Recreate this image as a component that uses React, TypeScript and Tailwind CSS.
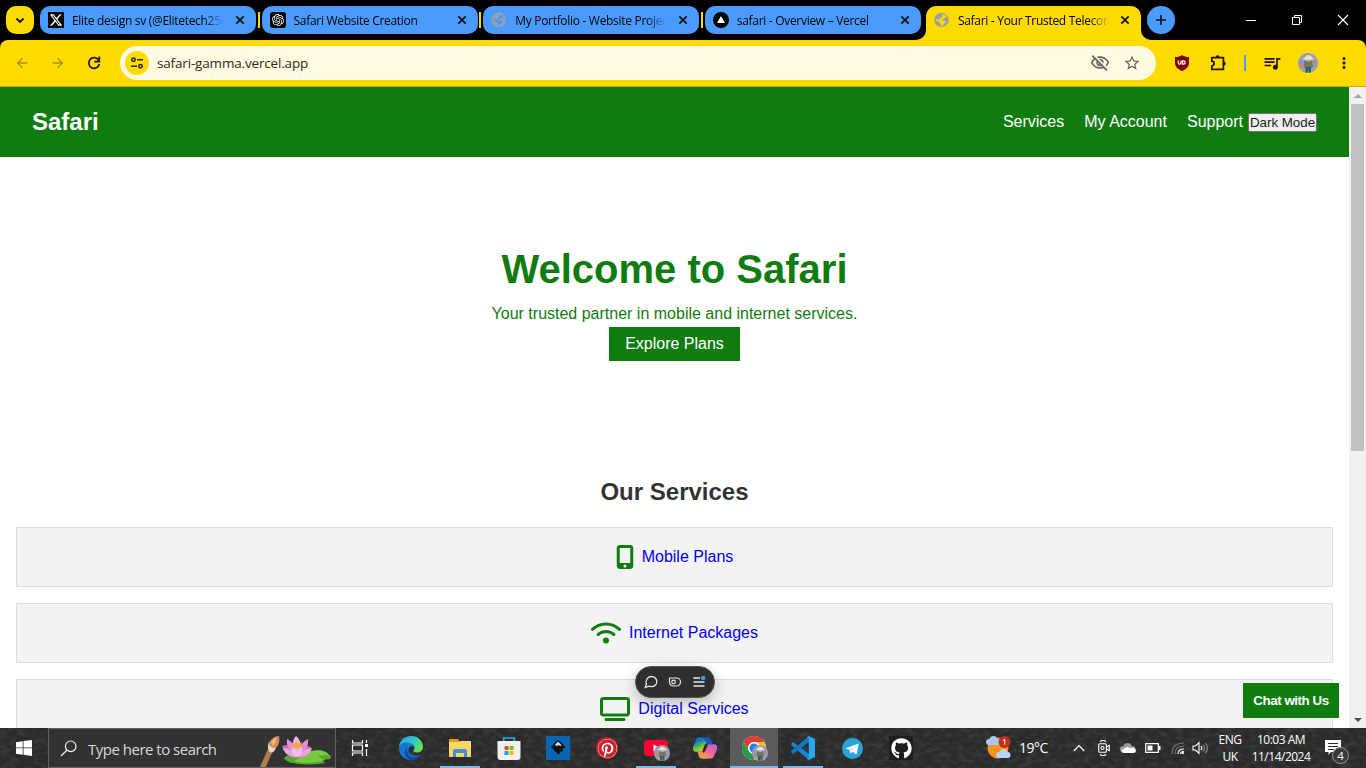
import React from 'react';
import { FaXTwitter, FaMobileScreenButton, FaWifi, FaTv, FaPinterest, FaGithub } from 'react-icons/fa6';
import { SiOpenai } from 'react-icons/si';
import {
  MdArrowBack,
  MdArrowForward,
  MdOutlineVisibilityOff,
  MdStarBorder,
  MdQueueMusic,
  MdMoreVert,
} from 'react-icons/md';

function Globe({ land }: { land: string }) {
  return (
    <svg viewBox="0 0 16 16" className="h-4 w-4">
      <circle cx="7.500" cy="8" r="7.200" fill="#9aa0a6" />
      <path
        d="M8.500 2.300c2 .2 3.500 1.400 4.300 3-.9.200-1.500.9-2.600.8-.3 1.200-1.900.8-2.300 1.600-.3.700.6.8 1.500.9 1.400.1 2.300.5 2.100 1.500-.2 1.200-1.700 1.300-2 2.300-.3 1-1.300 1.600-2.600 1.300.2-1-.1-1.700-.8-2.100-.8-.4-.3-1.400-1-1.900-.8-.6-2.200-.5-3-1.300-.2-.3-.2-.8 0-1.200 1.200-.1 2.400.6 3.400.5.9-.1.400-1.200 1.100-1.800.7-.5 1.900-.4 1.700-1.500-.1-.7-.3-1.300.2-2.100z"
        fill={land}
      />
    </svg>
  );
}

function CloseX() {
  return (
    <svg viewBox="0 0 10 10" className="h-2.5 w-2.5 shrink-0">
      <path d="M1.300 1.300l7.400 7.400M8.700 1.300L1.300 8.700" stroke="#111" strokeWidth="1.700" fill="none" />
    </svg>
  );
}

function Tab({ icon, title, active = false }: { icon: React.ReactNode; title: string; active?: boolean }) {
  return (
    <div
      className={
        active
          ? 'relative flex h-[34px] w-[215px] shrink-0 items-start rounded-t-[10px] bg-[#ffdb00] pl-2 pt-1.5'
          : 'flex h-7 w-[216px] shrink-0 items-start rounded-[10px] bg-[#4b9bff] pl-2 pt-1.5'
      }
    >
      {active && (
        <>
          <svg viewBox="0 0 10 10" className="absolute -left-2.5 bottom-0 h-2.5 w-2.5">
            <path d="M10 0v10H0A10 10 0 0 0 10 0z" fill="#ffdb00" />
          </svg>
          <svg viewBox="0 0 10 10" className="absolute -right-2.5 bottom-0 h-2.5 w-2.5">
            <path d="M0 0v10h10A10 10 0 0 1 0 0z" fill="#ffdb00" />
          </svg>
        </>
      )}
      <div className="flex h-4 w-4 shrink-0 items-center justify-center">{icon}</div>
      <div className="ml-2 mt-px h-4 w-[151px] overflow-hidden whitespace-nowrap text-[12px] leading-4 tracking-[-0.3px] text-black [mask-image:linear-gradient(to_right,#000_132px,transparent_151px)]">
        {title}
      </div>
      <div className={active ? 'ml-[11px] pt-[3px]' : 'ml-3 pt-[3px]'}>
        <CloseX />
      </div>
    </div>
  );
}

function Separator() {
  return (
    <div className="flex w-[5.600px] shrink-0 justify-center">
      <div className="mt-1.5 h-4 w-0.5 shrink-0 bg-[#ffdb00]" />
    </div>
  );
}

function Avatar({ className }: { className: string }) {
  return (
    <svg viewBox="0 0 20 20" className={className}>
      <clipPath id="face">
        <circle cx="10" cy="10" r="10" />
      </clipPath>
      <g clipPath="url(#face)">
        <rect width="20" height="20" fill="#8e9bc6" />
        <rect y="14" width="20" height="6" fill="#98a4ac" />
        <path d="M1 12l4-1 1 3-4 1zM14 8.500l4-1v2l-4 1z" fill="#e77b5b" />
        <path d="M6 8l8 0 1 6-2 1H7l-1-1z" fill="#727963" />
        <path d="M7.500 14h5.500v6H11l-.7-4-.8 4h-2z" fill="#345d60" />
        <circle cx="10.300" cy="6.500" r="2.400" fill="#c8a184" />
        <path d="M4 6c1-1 3-1 3.500-2.500 1-1.800 5-1.800 6 0C14 5 15 5 16.500 6c-3 1-9.500 1-12.500 0z" fill="#f0e4c8" />
      </g>
    </svg>
  );
}

function BrowserChrome() {
  return (
    <>
      <div className="flex h-10 items-start bg-black pl-1.5 pt-1.5">
        <div className="flex h-7 w-7 shrink-0 items-center justify-center rounded-[10px] bg-[#ffdb00]">
          <svg viewBox="0 0 10 10" className="h-2.5 w-2.5">
            <path d="M1.500 3.500L5 7l3.500-3.500" fill="none" stroke="#111" strokeWidth="1.800" />
          </svg>
        </div>
        <div className="ml-1.5 flex w-[1101px] shrink-0 items-start">
          <Tab
            title="Elite design sv (@Elitetech254)"
            icon={
              <span className="flex h-4 w-4 items-center justify-center bg-black">
                <FaXTwitter className="h-3.5 w-3.5 text-white" />
              </span>
            }
          />
          <Separator />
          <Tab
            title="Safari Website Creation"
            icon={
              <span className="flex h-4 w-4 items-center justify-center rounded-[3px] bg-black">
                <SiOpenai className="h-3 w-3 text-white" />
              </span>
            }
          />
          <Separator />
          <Tab title="My Portfolio - Website Project" icon={<Globe land="#4b9bff" />} />
          <Separator />
          <Tab
            title="safari - Overview – Vercel"
            icon={
              <svg viewBox="0 0 16 16" className="h-4 w-4">
                <circle cx="8" cy="8" r="8" />
                <path d="M8 4l4 7H4z" fill="#fff" />
              </svg>
            }
          />
          <div className="w-[5.200px] shrink-0" />
          <Tab active title="Safari - Your Trusted Telecom Partner" icon={<Globe land="#ffdb00" />} />
        </div>
        <div className="ml-1.5 flex h-7 w-7 shrink-0 items-center justify-center rounded-full bg-[#4b9bff]">
          <svg viewBox="0 0 10 10" className="h-2.5 w-2.5">
            <path d="M5 0v10M0 5h10" stroke="#111" strokeWidth="1.600" />
          </svg>
        </div>
        <div className="ml-[53px] mt-[-6px] flex h-10">
          <svg viewBox="0 0 46 40" className="h-10 w-[46px]">
            <path d="M18 20.500h10" stroke="#fff" />
          </svg>
          <svg viewBox="0 0 46 40" className="h-10 w-[46px]">
            <path d="M18.500 17.500h7v7h-7zM20.500 17.500v-2h7v7h-2" fill="none" stroke="#fff" />
          </svg>
          <svg viewBox="0 0 46 40" className="h-10 w-[46px]">
            <path d="M18 15l10 10M28 15L18 25" stroke="#fff" strokeWidth="1.200" />
          </svg>
        </div>
      </div>
      <div className="bg-black">
        <div className="flex h-[47px] items-start rounded-t-lg border-b border-[#c9aa13] bg-[#ffdb00] pt-1.5">
          <div className="ml-[14px] flex h-[34px] items-center">
            <MdArrowBack className="h-4 w-4 text-[#a98f10]" />
            <MdArrowForward className="ml-5 h-4 w-4 text-[#a98f10]" />
            <svg viewBox="0 0 16 16" className="ml-5 h-4 w-4">
              <path d="M12.600 5.200A5.300 5.300 0 1 0 13.300 9" fill="none" stroke="#21120a" strokeWidth="1.700" />
              <path d="M13.300 1.600v5H8.300" fill="none" stroke="#21120a" strokeWidth="1.700" />
            </svg>
          </div>
          <div className="ml-[18px] flex h-[34px] w-[1036px] shrink-0 items-center rounded-full bg-[#fffae0] pl-[5px]">
            <div className="flex h-6 w-6 shrink-0 items-center justify-center rounded-full bg-[#ffdb00]">
              <svg viewBox="0 0 14 14" className="h-3.5 w-3.5" fill="none" stroke="#30230c" strokeWidth="1.500">
                <circle cx="3.500" cy="3.800" r="1.700" />
                <path d="M7 3.800h6M1 10.200h6" />
                <circle cx="10.500" cy="10.200" r="1.700" />
              </svg>
            </div>
            <span className="ml-2 text-[13.500px] leading-5 tracking-[-0.170px] text-[#2d2a1c]">safari-gamma.vercel.app</span>
            <MdOutlineVisibilityOff className="ml-auto h-5 w-5 text-[#66655d]" />
            <MdStarBorder className="ml-[13px] mr-[15px] h-[18px] w-[18px] text-[#66655d]" />
          </div>
          <div className="flex h-[34px] items-center">
            <svg viewBox="0 0 16 16" className="ml-[18px] h-4 w-4">
              <path d="M8 0c2 1.500 4 2 7 2v6c0 4-3.500 6.500-7 8-3.500-1.500-7-4-7-8V2c3 0 5-.5 7-2z" fill="#800000" />
              <path d="M4.200 5.500v2.300a1.400 1.400 0 0 0 2.800 0V5.500M8.500 5.900v3.200h1a1.600 1.600 0 0 0 0-3.200z" fill="none" stroke="#fff" strokeWidth="1.200" />
            </svg>
            <svg viewBox="0 0 20 20" className="ml-[18px] h-5 w-5">
              <path
                d="M3.800 4.600h11.600v11.800H3.800v-3.600q2.400-.4 2.400-2.300T3.800 8.200z"
                fill="none"
                stroke="#21120a"
                strokeWidth="1.700"
                strokeLinejoin="round"
              />
              <path d="M7.600 4.200a2 2 0 0 1 4 0zM15.800 8.500a2 2 0 0 1 0 4z" fill="#21120a" />
            </svg>
            <div className="ml-4 h-4 w-0.5 bg-[#4b9bff]" />
            <MdQueueMusic className="ml-4 h-5 w-5 text-[#21120a]" />
            <Avatar className="ml-4 h-5 w-5" />
            <MdMoreVert className="ml-[17px] h-[18px] w-[18px] text-[#21120a]" />
          </div>
        </div>
      </div>
    </>
  );
}

function ServiceCard({ icon, label }: { icon: React.ReactNode; label: string }) {
  return (
    <div className="mb-4 flex h-[60px] shrink-0 items-center justify-center border border-[#ddd] bg-[#f3f3f3]">
      {icon}
      <span className="ml-2 text-base leading-6 text-[#0000ee]">{label}</span>
    </div>
  );
}

function Site() {
  return (
    <div className="relative flex h-[641px] overflow-hidden bg-white font-['Liberation_Sans',Arial,sans-serif]">
      <div className="w-[1349px] shrink-0">
        <header className="flex h-[70px] items-center justify-between bg-[#107c10] px-8 text-white">
          <div className="text-2xl font-bold">Safari</div>
          <nav className="flex items-center text-base">
            <span>Services</span>
            <span className="ml-5">My Account</span>
            <span className="ml-5">Support</span>
            <span className="ml-[5px] mt-px flex h-[19px] w-[69px] items-center justify-center whitespace-nowrap rounded-[2px] border border-[#767676] bg-[#efefef] text-[13.333px] leading-4 text-[#222]">
              Dark Mode
            </span>
          </nav>
        </header>
        <section className="flex h-[284px] flex-col items-center pt-[89px] text-[#107c10]">
          <h1 className="text-[40px] font-bold leading-[46px]">Welcome to Safari</h1>
          <p className="mt-3 text-base leading-[20px]">Your trusted partner in mobile and internet services.</p>
          <div className="mt-[3px] flex h-[34px] w-[131px] items-center justify-center bg-[#107c10] text-base text-white">
            Explore Plans
          </div>
        </section>
        <section className="px-4 pt-[37px]">
          <h2 className="mb-[21px] text-center text-2xl font-bold leading-7 text-[#333]">Our Services</h2>
          <ServiceCard icon={<FaMobileScreenButton className="h-6 w-[18px] text-[#107c10]" />} label="Mobile Plans" />
          <ServiceCard icon={<FaWifi className="h-6 w-[30px] text-[#107c10]" />} label="Internet Packages" />
          <ServiceCard icon={<FaTv className="h-6 w-[30px] text-[#107c10]" />} label="Digital Services" />
        </section>
      </div>
      <div className="flex w-[17px] shrink-0 flex-col items-center bg-[#f1f1f1]">
        <div className="flex h-[17px] items-center">
          <svg viewBox="0 0 8 4" className="h-1 w-2"><path d="M0 4l4-4 4 4z" fill="#a3a3a3" /></svg>
        </div>
        <div className="h-[347px] w-[13px] bg-[#c1c1c1]" />
        <div className="mt-auto flex h-[17px] items-center">
          <svg viewBox="0 0 8 4" className="h-1 w-2"><path d="M0 0l4 4 4-4z" fill="#505050" /></svg>
        </div>
      </div>
      <div className="absolute left-[1243px] top-[596px] flex h-[35px] w-24 items-center justify-center whitespace-nowrap bg-[#107c10] text-[13.333px] font-bold tracking-[-0.450px] text-white">
        Chat with Us
      </div>
      <div className="absolute left-[635px] top-[579px] flex h-8 w-20 items-center justify-center gap-2.5 rounded-full border border-[#555] bg-[#2e2e2e] shadow-[0_4px_14px_rgba(0,0,0,0.25)]">
        <svg viewBox="0 0 14 14" className="h-3.5 w-3.5" fill="none" stroke="#e8e8e8" strokeWidth="1.300">
          <path d="M7.300 1.500C10.500 1.500 12.800 3.700 12.800 6.600s-2.300 5-5.500 5c-.8 0-1.500-.1-2.100-.4L1.200 12.500l1.300-3.200C1.100 5.500 3.500 1.500 7.300 1.500z" />
        </svg>
        <svg viewBox="0 0 14 14" className="h-3.5 w-3.5" fill="none" stroke="#e8e8e8" strokeWidth="1.200">
          <path d="M1.500 3h7a4 4 0 0 1 0 8h-3a4 4 0 0 1-4-4z" />
          <circle cx="5.600" cy="7" r="1.800" />
        </svg>
        <svg viewBox="0 0 14 14" className="h-3.5 w-3.5">
          <path d="M1.500 3h6.500M1.500 7h11M1.500 11h11" stroke="#e8e8e8" strokeWidth="1.400" />
          <circle cx="11.200" cy="2.900" r="2.200" fill="#3b9cff" />
        </svg>
      </div>
    </div>
  );
}

function Lotus() {
  return (
    <svg viewBox="0 0 80 38" className="h-[38px] w-20">
      <path d="M5 38C8 31 11 24 14 18l5 2c-3 6-6 12-8 18z" fill="#a97c50" />
      <path d="M14 13c-2 4-1 8 1 10 2 1 4 0 5-2l2-5z" fill="#e8d3cc" />
      <path d="M14 15c1-5 6-8 10-8 1 4 0 9-3 12-3 0-6-1-7-4z" fill="#d28a55" />
      <path d="M16 14c1-3 3-5 6-6-1 4-2 7-4 9z" fill="#f0b47e" />
      <path d="M29 29c6-7 30-9 42-5l5 3-1 3-8 1 3 3c-9 2-38 3-41-5z" fill="#54ab2f" />
      <path d="M54 23c8-3 17-2 20 3l-12 1 8 4c-8 3-22 4-31 1z" fill="#79cb3e" />
      <g transform="translate(-1 0)">
        <path d="M28 17c4-2 10-1 14 1 5-2 10-2 15 0-1 6-6 11-13 11-8 0-14-5-16-12z" fill="#c968bd" />
        <path d="M43 28c-7-4-11-11-10-18 6 3 10 9 10 18zM44 28c7-4 11-11 10-18-6 3-10 9-10 18z" fill="#e18fd5" />
        <path d="M43 28c-5-7-6-16-1-21 6 5 7 14 1 21z" fill="#f2b3e7" />
        <path d="M43 28c-4-6-9-9-14-9 1 5 7 10 14 9zM44 28c4-6 9-9 14-9-1 5-7 10-14 9z" fill="#eaa5df" />
        <path d="M38 14l3 1 1-3 3 3 3-2-1 5-4 2-4-2z" fill="#f8a83b" />
        <path d="M43 28c-4-2-6-6-5-9 3 1 5 4 5 9zM43 28c4-2 6-6 5-9-3 1-5 4-5 9z" fill="#f5c3ed" />
      </g>
    </svg>
  );
}

function AppSlot({ children, running = false, focused = false }: { children: React.ReactNode; running?: boolean; focused?: boolean }) {
  return (
    <div className={focused ? 'relative mr-px flex h-10 w-12 items-center justify-center bg-[#5b5b5b]' : 'relative mr-px flex h-10 w-12 items-center justify-center'}>
      {children}
      {running && (
        <div className={focused ? 'absolute bottom-0 left-0 h-0.5 w-12 bg-[#76b9ed]' : 'absolute bottom-0 left-1 h-0.5 w-10 bg-[#76b9ed]'} />
      )}
    </div>
  );
}

function EdgeIcon() {
  return (
    <svg viewBox="0 0 24 24" className="h-6 w-6">
      <defs>
        <linearGradient id="edgeTop" x1="0" y1="0" x2="1" y2=".4">
          <stop offset="0" stopColor="#249fdf" />
          <stop offset=".6" stopColor="#31c5ce" />
          <stop offset="1" stopColor="#64dc61" />
        </linearGradient>
      </defs>
      <path d="M0 12C0 5 5 0 12 0s12 5 12 10.500c0 4-3 6-6 6-2 0-4.200-.7-3.400-2.200.7-1 1.200-2 .7-3.500C14 7 4 6 0 12z" fill="url(#edgeTop)" />
      <path d="M0 12C.5 8 4 6.500 7.500 6.500c4 0 7.300 2 7.800 4.500-1.300-1.200-4.300-1-5.500 1.500-2 5 4 9.300 12.400 6C20 22 16 24 12 24 5 24 0 18.500 0 12z" fill="#1375cf" />
      <path d="M9 11c-3 4 0 9.500 5 10 3 .3 6-.8 8.200-2.500C20 22 16 24 12 24c-4-1-6-4.500-6-7.500 0-2.300 1-4.300 3-5.500z" fill="#0b4b9b" />
    </svg>
  );
}

function Taskbar() {
  return (
    <footer className="relative flex h-10 items-center overflow-hidden bg-[#292a29] text-white">
      <svg className="absolute inset-0 h-10 w-full opacity-10">
        <filter id="grain">
          <feTurbulence type="fractalNoise" baseFrequency=".12 .2" numOctaves="5" seed="8" />
          <feColorMatrix values="0 0 0 0 .65 0 0 0 0 .7 0 0 0 0 .68 0 2.500 0 0 -1" />
        </filter>
        <rect width="1366" height="40" filter="url(#grain)" />
      </svg>
      <div className="relative flex h-10 w-12 items-center justify-center">
        <svg viewBox="0 0 16 16" className="h-4 w-4">
          <path d="M0 2.200l6.700-1v6.300H0zM7.500 1.100L16 0v7.500H7.500zM0 8.300h6.700v6.400L0 13.800zM7.500 8.300H16V16l-8.500-1.200z" fill="#fff" />
        </svg>
      </div>
      <div className="relative flex h-10 w-72 items-center border border-[#616161] bg-[#323232] pl-[11px]">
        <svg viewBox="0 0 17 17" className="h-[17px] w-[17px]">
          <circle cx="10.700" cy="6.300" r="5.300" fill="none" stroke="#eee" strokeWidth="1.200" />
          <path d="M7 10L1 16" stroke="#eee" strokeWidth="1.300" />
        </svg>
        <span className="ml-[11px] whitespace-nowrap pt-px text-[15px] leading-5 tracking-[-0.500px] text-[#d8d8d8]">Type here to search</span>
        <div className="absolute bottom-0 right-0"><Lotus /></div>
      </div>
      <div className="relative flex h-10 w-12 items-center justify-center">
        <svg viewBox="0 0 18 18" className="h-[18px] w-[18px]" fill="none" stroke="#fff" strokeWidth="1.200">
          <path d="M1.500 1v3h10V1M1.500 17v-3h10v3M1.500 6h10v6h-10zM15.500 1v3M15.500 10v7" />
          <path d="M14 5h3v3h-3z" fill="#fff" stroke="none" />
        </svg>
      </div>
      <div className="relative ml-[3px] flex">
        <AppSlot><EdgeIcon /></AppSlot>
        <AppSlot running>
          <svg viewBox="0 0 24 24" className="h-6 w-6">
            <path d="M1 3h9l2 3H1z" fill="#e19c12" />
            <path d="M1 6h10l2-1h10v16H1z" fill="#fbd568" />
            <path d="M5 21v-6q0-2 2-2h10q2 0 2 2v6h-3v-4H8v4z" fill="#3e8fd3" />
          </svg>
        </AppSlot>
        <AppSlot>
          <svg viewBox="0 0 24 24" className="h-6 w-6">
            <path d="M6.700 6V2h10.600v4" fill="none" stroke="#24afe7" strokeWidth="1.700" />
            <path d="M.5 5h23v16q0 3-3 3h-17q-3 0-3-3z" fill="#f1f1f1" />
            <path d="M7.500 10h4v4h-4z" fill="#f25022" />
            <path d="M12.500 10h4v4h-4z" fill="#7fba00" />
            <path d="M7.500 15h4v4h-4z" fill="#00a4ef" />
            <path d="M12.500 15h4v4h-4z" fill="#ffb900" />
          </svg>
        </AppSlot>
        <AppSlot>
          <svg viewBox="0 0 24 24" className="h-6 w-6">
            <path d="M0 0h24v24H0z" fill="#0864b5" />
            <path d="M12 4.500q1 0 2 1l5 5c1 1.500-1.500 2-3 2.500 1 1 2 1.500.5 2.200-2 .7-2.500 0-2.500 1.800 0 1-3.500 1.500-3.500.3 0-1 .5-1.500-1.500-2-2-.6-.5-1.300-1-2-1-1-3.500-1-2.500-2.800l4.500-5q1-1 2-1z" fill="#111" />
            <path d="M12 5.500l3.800 4-1.800.5-1.500-1-1.500 1.300L9.500 9l-1.300.7z" fill="#d8d8d8" />
          </svg>
        </AppSlot>
        <AppSlot>
          <span className="flex h-[22px] w-[22px] items-center justify-center rounded-full bg-[#c8232c]">
            <FaPinterest className="h-[19px] w-[19px] rounded-full bg-white text-[#c8232c]" />
          </span>
        </AppSlot>
        <AppSlot running>
          <div className="relative h-6 w-6">
            <svg viewBox="0 0 24 24" className="h-6 w-6">
              <rect y="4" width="24" height="16" rx="4" fill="#ff0033" />
              <path d="M9.500 8.500v7l6-3.500z" fill="#fff" />
            </svg>
            <Avatar className="absolute -right-0.5 -bottom-[1px] h-4 w-4" />
          </div>
        </AppSlot>
        <AppSlot>
          <svg viewBox="0 0 24 24" className="h-6 w-6">
            <defs>
              <linearGradient id="copA" x1="0" y1="0" x2=".5" y2="1">
                <stop offset="0" stopColor="#1fb4e8" />
                <stop offset=".3" stopColor="#1766d1" />
                <stop offset=".6" stopColor="#42b75c" />
                <stop offset="1" stopColor="#eacb28" />
              </linearGradient>
              <linearGradient id="copB" x1="1" y1="0" x2="0" y2="1">
                <stop offset="0" stopColor="#ae67ef" />
                <stop offset=".5" stopColor="#f06295" />
                <stop offset="1" stopColor="#ffa465" />
              </linearGradient>
            </defs>
            <path d="M6 1.500h9l-4.500 14.300H3.500C0 15.800-1 13.500.3 10L3 4q.8-2.500 3-2.500z" fill="url(#copA)" />
            <path d="M18 22.500H9l4.500-14.300h7c3.500 0 4.500 2.300 3.200 5.800L21 20q-.8 2.500-3 2.500z" fill="url(#copB)" />
            <path d="M10 1.500h5.500q2 0 2.700 2.500l1.300 4.200h-4q-1.800 0-2.500-1.700z" fill="#1658c5" />
            <path d="M14 22.500H8.500q-2 0-2.700-2.500l-1.300-4.200h4q1.800 0 2.500 1.700z" fill="#f8944e" />
            <path d="M12 8.200h3l-3 7.600H9z" fill="#2b2b2b" />
          </svg>
        </AppSlot>
        <AppSlot running focused>
          <div className="relative h-6 w-6">
            <svg viewBox="0 0 24 24" className="h-6 w-6">
              <circle cx="12" cy="12" r="12" fill="#fff" />
              <path d="M1.600 6A12 12 0 0 1 22.400 6H12a6 6 0 0 0-5.200 9z" fill="#e33b2e" />
              <path d="M22.400 6A12 12 0 0 1 12 24l5.200-9A6 6 0 0 0 12 6z" fill="#fbc116" />
              <path d="M1.600 6l5.200 9a6 6 0 0 0 10.400 0L12 24A12 12 0 0 1 1.600 6z" fill="#249b48" />
              <circle cx="12" cy="12" r="5.500" fill="#fff" />
              <circle cx="12" cy="12" r="4.500" fill="#2f78e5" />
            </svg>
            <Avatar className="absolute -right-0.5 -bottom-[1px] h-4 w-4" />
          </div>
        </AppSlot>
        <AppSlot running>
          <svg viewBox="0 0 24 24" className="h-6 w-6">
            <path d="M0 8l2-2 16 12v6L1 9.500z" fill="#1685d2" />
            <path d="M0 16l2 2L18 6V0L0 15z" fill="#0877c4" />
            <path d="M17.500 0L24 3v18l-6.500 3L16.200 23l1.500-1V2L16.200 1z" fill="#2aa7f2" />
          </svg>
        </AppSlot>
        <AppSlot>
          <svg viewBox="0 0 20 20" className="h-[21px] w-[21px]">
            <circle cx="10" cy="10" r="10" fill="#29a4db" />
            <path d="M3.800 9.800L15 5.500q1-.3.800.8L14 14.700q-.2 1-1.200.5L9.900 13l-1.600 1.500q-.5.300-.6-.2L7 11.200l-3-1q-.8-.2-.2-.4z" fill="#fff" />
            <path d="M7.200 11.200l6.300-4-5 5-.5 2z" fill="#b6d9ec" />
          </svg>
        </AppSlot>
        <AppSlot>
          <span className="flex h-6 w-6 items-center justify-center bg-[#201d20]">
            <FaGithub className="h-[21px] w-[21px] text-white" />
          </span>
        </AppSlot>
      </div>
      <div className="relative ml-auto flex h-10 items-center">
        <svg viewBox="0 0 26 24" className="h-6 w-[26px]">
          <circle cx="12" cy="12" r="10.500" fill="#f59420" />
          <path d="M3 9q-3 0-3-3t3.500-3q1-3 4-3t4 3q3 0 3 3t-3 3z" fill="#aac7f1" />
          <path d="M13 22q-3 0-3-3t3.500-3q1-3 4-3t4 3q3 0 3 3t-3 3z" fill="#b7d6f8" />
          <circle cx="18.500" cy="6" r="6" fill="#c42b1c" />
          <path d="M17 4.600l1.800-1.200v5.300" fill="none" stroke="#fff" />
        </svg>
        <span className="ml-[7px] w-[29px] whitespace-nowrap text-[14px] leading-4 tracking-[-0.5px]">19°C</span>
        <svg viewBox="0 0 12 8" className="ml-[25px] h-2 w-3" fill="none" stroke="#fff" strokeWidth="1.200">
          <path d="M.8 7L6 1.500 11.200 7" />
        </svg>
        <svg viewBox="0 0 12 16" className="ml-[13px] h-4 w-3" fill="none" stroke="#fff" strokeWidth="1.100">
          <path d="M2 1.500q3-2 6 0M2 14.500q3 2 6 0" />
          <rect x=".8" y="3.800" width="7.500" height="8.400" rx="1" />
          <circle cx="4.500" cy="8" r="1.500" />
          <path d="M8.500 7l2.700-1.700v5.400L8.500 9" />
        </svg>
        <svg viewBox="0 0 16 12" className="ml-[10px] h-3 w-4">
          <path d="M4 10Q0 10 0 7t3.500-3Q4 1 7.500 1t4 3q4 0 4 3t-3.500 4z" fill="#9b9b9b" />
          <path d="M4 11q-3 0-2.500-3L7 5l4 1q4-1 5 2.500 0 2.500-3 2.500z" fill="#fff" />
        </svg>
        <svg viewBox="0 0 16 10" className="ml-[9px] h-2.5 w-4">
          <path d="M.7.7h12.600v8.600H.7z" fill="none" stroke="#fff" strokeWidth="1.200" />
          <path d="M14 3h1.500v4H14zM2.500 2.500h5v5h-5z" fill="#fff" />
        </svg>
        <svg viewBox="0 0 14 14" className="ml-2.5 h-3.5 w-3.5" fill="none" strokeWidth="1.100">
          <path d="M1 13Q1 2 13 2M4 13q0-8 9-8" stroke="#777" />
          <path d="M7 13q0-5 6-5M9.500 13q0-2.500 3.500-2.500" stroke="#fff" />
          <circle cx="11.700" cy="12" r="1.200" fill="#fff" />
        </svg>
        <svg viewBox="0 0 18 14" className="ml-[7px] h-3.5 w-[18px]" fill="none" stroke="#fff" strokeWidth="1.100">
          <path d="M1 5h2.500L7 1.500v11L3.500 9H1z" />
          <path d="M9 5q1.700 2 0 4" />
          <path d="M11 3.500q3 3.500 0 7M13.500 2q4 5 0 10" stroke="#888" />
        </svg>
        <div className="ml-[7px] flex w-[26px] flex-col items-center whitespace-nowrap text-[12px] leading-[17px] tracking-[-0.450px]">
          <span>ENG</span>
          <span>UK</span>
        </div>
        <div className="ml-2 flex w-[60px] flex-col items-center whitespace-nowrap text-[12px] leading-[17px] tracking-[-0.500px]">
          <span>10:03 AM</span>
          <span>11/14/2024</span>
        </div>
        <svg viewBox="0 0 24 24" className="ml-[14px] mr-[17px] mt-2 h-6 w-6">
          <path d="M0 0h16v12H6l-2.500 3v-3H0z" fill="#fff" />
          <path d="M3 3.500h10M3 6.500h10M3 9.500h6" stroke="#292929" />
          <circle cx="15.500" cy="15.500" r="8" fill="#3a3a3a" stroke="#999" />
          <text x="15.500" y="19.700" textAnchor="middle" fill="#fff" fontSize="11.500">4</text>
        </svg>
      </div>
    </footer>
  );
}

export default function App() {
  return (
    <div className="h-[768px] w-[1366px] overflow-hidden font-['Open_Sans','Noto_Sans',sans-serif]">
      <BrowserChrome />
      <Site />
      <Taskbar />
    </div>
  );
}
